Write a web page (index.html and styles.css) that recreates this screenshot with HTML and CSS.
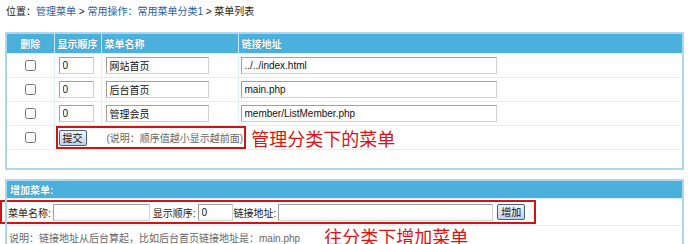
FILE: index.html
```html
<!DOCTYPE html>
<html>
<head>
    <meta charset="utf-8" />
    <title>菜单列表</title>
    <link rel="stylesheet" href="styles.css">
</head>
<body>
    <div class="crumb">位置：<a href="#">管理菜单</a> &gt; <a href="#">常用操作：常用菜单分类1</a> &gt; 菜单列表</div>

    <table class="list">
        <colgroup>
            <col class="w-del" />
            <col class="w-ord" />
            <col class="w-name" />
            <col />
        </colgroup>
        <tr class="head">
            <th class="c-del">删除</th>
            <th>显示顺序</th>
            <th>菜单名称</th>
            <th>链接地址</th>
        </tr>
        <tr>
            <td class="c-del"><input type="checkbox" /></td>
            <td><input class="ord" type="text" value="0" /></td>
            <td><input class="name" type="text" value="网站首页" /></td>
            <td class="c-url"><input class="url" type="text" value="../../index.html" /></td>
        </tr>
        <tr>
            <td class="c-del"><input type="checkbox" /></td>
            <td><input class="ord" type="text" value="0" /></td>
            <td><input class="name" type="text" value="后台首页" /></td>
            <td class="c-url"><input class="url" type="text" value="main.php" /></td>
        </tr>
        <tr>
            <td class="c-del"><input type="checkbox" /></td>
            <td><input class="ord" type="text" value="0" /></td>
            <td><input class="name" type="text" value="管理会员" /></td>
            <td class="c-url"><input class="url" type="text" value="member/ListMember.php" /></td>
        </tr>
        <tr class="submit">
            <td class="c-del"><input type="checkbox" /></td>
            <td colspan="3" class="c-save">
                <div class="line">
                    <span class="mark mark-save"><button class="btn">提交</button><span class="tip">(说明：顺序值越小显示越前面)</span></span>
                    <span class="note">管理分类下的菜单</span>
                </div>
            </td>
        </tr>
        <tr class="blank"><td colspan="4"></td></tr>
    </table>

    <table class="add">
        <tr class="head"><th>增加菜单:</th></tr>
        <tr class="form">
            <td>
                <div class="mark mark-add">
                    <span>菜单名称:</span><input class="a-name" type="text" />
                    <span class="lbl">显示顺序:</span><input class="a-ord" type="text" value="0" />
                    <span class="lbl lbl-url">链接地址:</span><input class="a-url" type="text" />
                    <button class="btn">增加</button>
                </div>
            </td>
        </tr>
        <tr class="foot">
            <td>
                <div class="line">
                    <span class="tip">说明：链接地址从后台算起，比如后台首页链接地址是：main.php</span>
                    <span class="note note-add">往分类下增加菜单</span>
                </div>
            </td>
        </tr>
    </table>
</body>
</html>
```

FILE: styles.css
```css
html, body {
    margin: 0;
    padding: 0;
    overflow: hidden;
    background: #fff;
}

body {
    font: 10px "Liberation Sans", "Noto Sans CJK SC", sans-serif;
    color: #222;
    white-space: nowrap;
}

.crumb {
    height: 24px;
    line-height: 24px;
    padding-left: 6px;
}

    .crumb a {
        color: #1f5ea8;
        text-decoration: none;
    }

table {
    border-collapse: collapse;
    table-layout: fixed;
    margin-left: 5px;
    width: 679px;
    border: 2px solid #a9d8ef;
}

.list {
    margin-top: 8px;
}

.add {
    margin-top: 9px;
}

.w-del {
    width: 48px;
}

.w-ord {
    width: 47px;
}

.w-name {
    width: 137px;
}

th {
    height: 19px;
    background: #4cb0dc;
    color: #fff;
    font-weight: bold;
    text-align: left;
    padding: 0 3px;
    border-left: 1px solid #c4e6f5;
    text-shadow: 0 0 1px #2b7fa8;
}

td {
    height: 23px;
    padding: 0 0 0 4px;
    border-top: 1px solid #dcf0f9;
    border-left: 1px solid #dcf0f9;
}

.c-del {
    text-align: center;
    padding: 0;
}

.c-url {
    padding-left: 2px;
}

input[type=text] {
    box-sizing: border-box;
    height: 17px;
    padding: 0 3px;
    border: 1px solid #a0a0a0;
    border-bottom-color: #d0d0d0;
    border-right-color: #d0d0d0;
    font: 10px "Liberation Sans", "Noto Sans CJK SC", sans-serif;
    color: #111;
    margin: 0;
    vertical-align: middle;
}

input[type=checkbox] {
    margin: 0;
    width: 11px;
    height: 11px;
    vertical-align: middle;
}

.ord {
    width: 35px;
}

.name {
    width: 103px;
}

.url {
    width: 256px;
}

.btn {
    height: 16px;
    padding: 0 3px;
    font: 10px "Noto Sans CJK SC", sans-serif;
    line-height: 14px;
    color: #111;
    border: 1px solid #4f5f7a;
    border-radius: 2px;
    background: linear-gradient(#eef3fb, #c3d1e8);
    vertical-align: middle;
}

.line {
    display: flex;
    align-items: center;
}

.mark {
    border: 2px solid #d01414;
}

.submit td {
    height: 22px;
}

.c-save {
    padding-left: 1px;
}

.mark-save {
    display: flex;
    align-items: center;
    box-sizing: border-box;
    height: 23px;
    padding: 0 1px 0 1px;
}

    .mark-save .tip {
        margin-left: 20px;
    }

.tip {
    color: #666;
}

.note {
    color: #e01010;
    font: 18px "Noto Sans CJK SC", sans-serif;
    line-height: 20px;
    margin-left: 5px;
}

.blank td {
    height: 18px;
}

.add th {
    height: 17px;
}

.add td {
    padding: 0 0 0 2px;
}

.form td {
    height: 26px;
}

.mark-add {
    display: flex;
    align-items: center;
    box-sizing: border-box;
    height: 24px;
    margin-left: -9px;
    width: 536px;
    padding-left: 6px;
}

.a-name {
    width: 97px;
    margin-left: 2px !important;
}

.a-ord {
    width: 35px;
    margin-left: 2px !important;
}

.a-url {
    width: 215px;
    margin-left: 2px !important;
}

.lbl {
    margin-left: 3px;
}

.lbl-url {
    margin-left: 1px;
}

.mark-add .btn {
    margin-left: 4px;
}

.foot td {
    height: 20px;
    vertical-align: top;
    padding-top: 2px;
}

.note-add {
    margin-left: 24px;
    margin-top: -2px;
}
```
